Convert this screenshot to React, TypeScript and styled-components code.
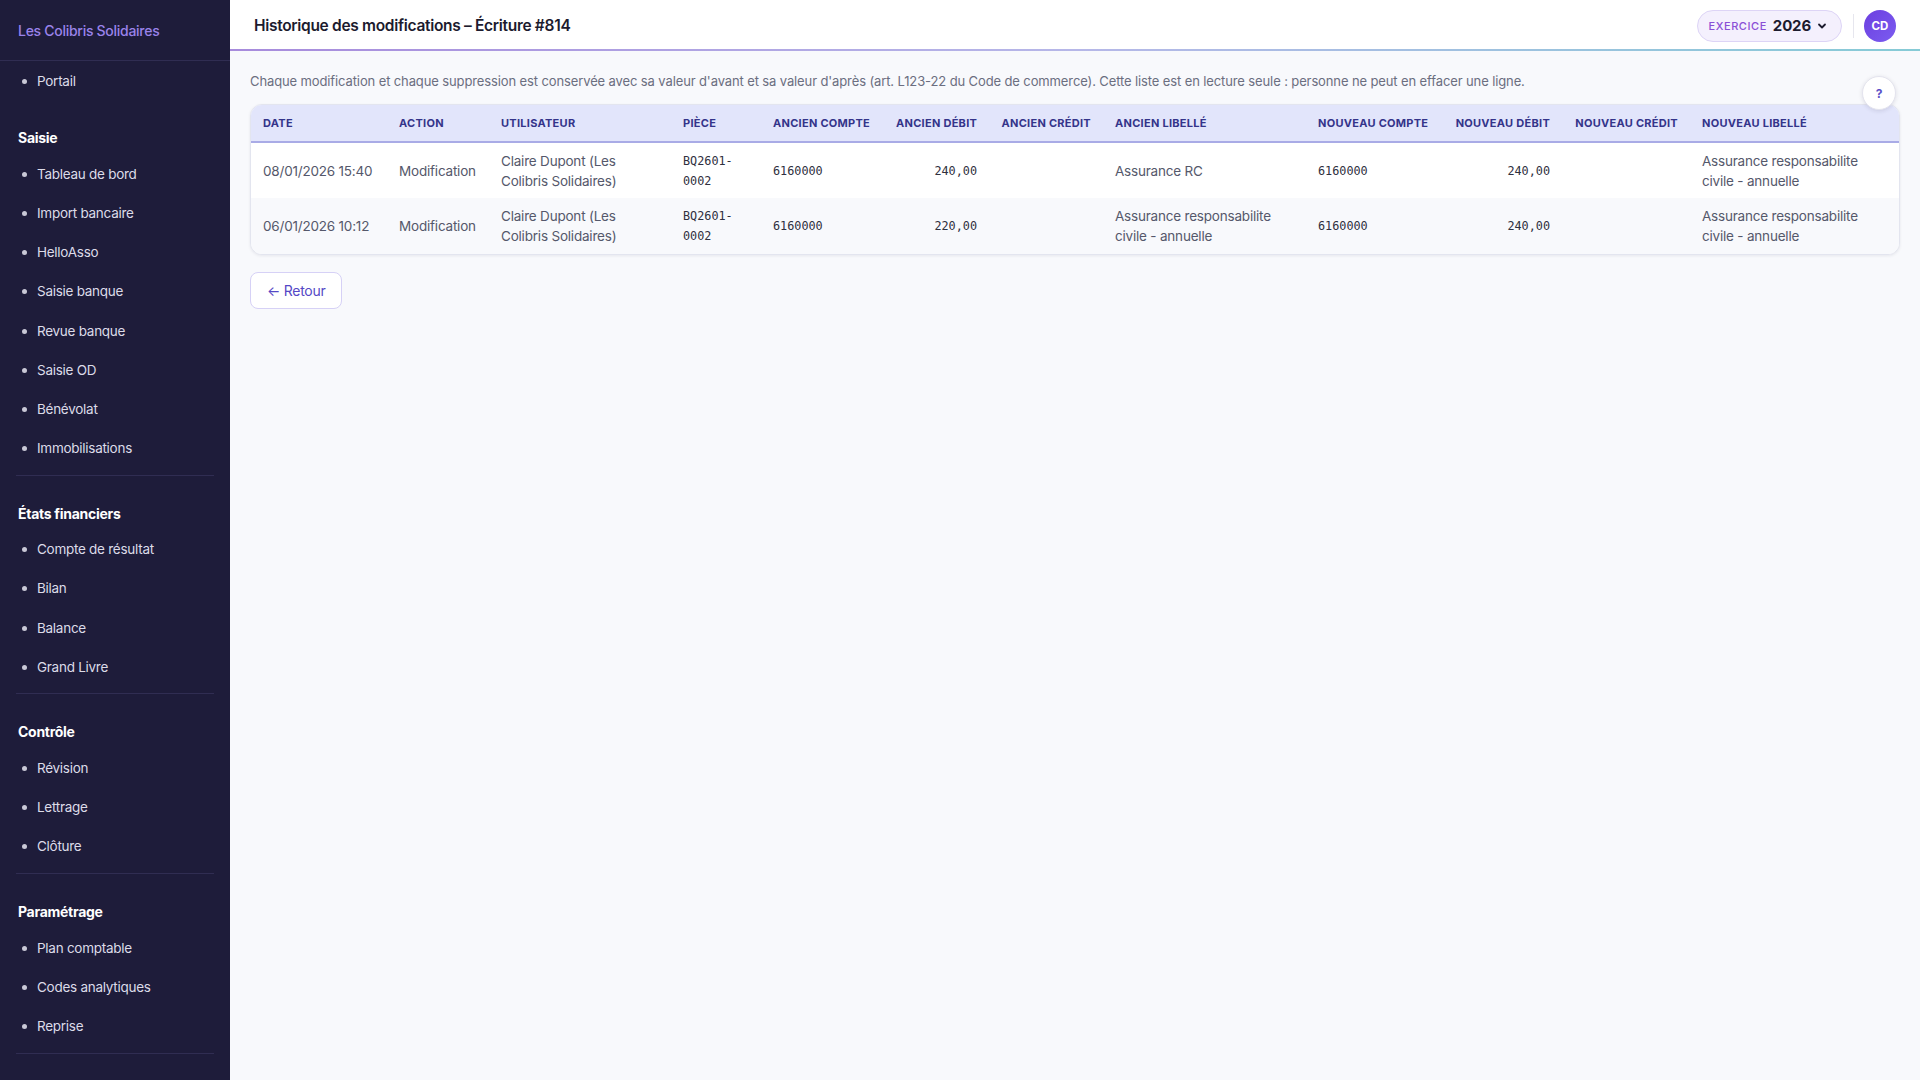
import React from 'react';
import styled, { createGlobalStyle } from 'styled-components';

const GlobalStyle = createGlobalStyle`
  html, body {
    margin: 0;
    padding: 0;
    height: 100%;
  }
  body {
    font-family: Inter, "Noto Sans", sans-serif;
    background: #f8f9fc;
    color: #2a2a3c;
  }
  #root {
    height: 100%;
  }
  * { box-sizing: border-box; }
`;

const Shell = styled.div`
  display: flex;
  height: 1080px;
  overflow: hidden;
`;

const Sidebar = styled.aside`
  width: 230px;
  flex-shrink: 0;
  background: #1e1c3a;
  display: flex;
  flex-direction: column;
  overflow: hidden;
`;

const Brand = styled.div`
  flex-shrink: 0;
  height: 61px;
  padding: 0 18px;
  display: flex;
  align-items: center;
  font-size: 14px;
  font-weight: 500;
  letter-spacing: -0.02em;
  color: #9a83ea;
  border-bottom: 1px solid #302d52;
`;

const NavSection = styled.div<{ $divided?: boolean }>`
  flex-shrink: 0;
  margin: 0 16px;
  padding-bottom: ${(p) => (p.$divided ? '7px' : '0')};
  border-bottom: ${(p) => (p.$divided ? '1px solid #302d52' : 'none')};
`;

const SectionTitle = styled.div`
  font-size: 14px;
  font-weight: 700;
  letter-spacing: -0.02em;
  line-height: 18px;
  color: #ffffff;
  padding: 29px 2px 7px;
`;

const NavList = styled.ul`
  list-style: none;
  margin: 0;
  padding: 0;
`;

const NavItem = styled.li`
  height: 39.2px;
  display: flex;
  align-items: center;
  padding-left: 21px;
  position: relative;
  font-size: 13.5px;
  letter-spacing: -0.02em;
  color: #dcdbe8;

  &::before {
    content: '';
    position: absolute;
    left: 6px;
    top: 50%;
    width: 5px;
    height: 5px;
    margin-top: -2px;
    border-radius: 50%;
    background: #c9c8d6;
  }
`;

const Main = styled.div`
  flex: 1;
  display: flex;
  flex-direction: column;
  min-width: 0;
`;

const TopBar = styled.header`
  flex-shrink: 0;
  height: 51px;
  background: #ffffff;
  display: flex;
  align-items: center;
  padding: 0 24px;
  position: relative;

  &::after {
    content: '';
    position: absolute;
    left: 0;
    right: 0;
    bottom: 0;
    height: 2px;
    background: linear-gradient(90deg, #a78bdc 0%, #b6b7e8 50%, #86cbd6 100%);
  }
`;

const PageTitle = styled.h1`
  margin: 0;
  font-size: 15.5px;
  font-weight: 600;
  letter-spacing: -0.02em;
  color: #1c1b2e;
`;

const TopRight = styled.div`
  margin-left: auto;
  display: flex;
  align-items: center;
`;

const YearPill = styled.div`
  height: 32px;
  padding: 0 14px 0 11px;
  border: 1px solid #ddd4f6;
  background: #f4f0fd;
  border-radius: 16px;
  display: flex;
  align-items: center;
  gap: 6px;
`;

const YearLabel = styled.span`
  font-size: 11px;
  font-weight: 500;
  letter-spacing: 0.05em;
  color: #8a4fd6;
  text-transform: uppercase;
`;

const YearValue = styled.span`
  font-size: 15px;
  font-weight: 700;
  letter-spacing: -0.01em;
  color: #1c1b2e;
`;

const VSep = styled.div`
  width: 1px;
  height: 24px;
  background: #e6e6ee;
  margin: 0 10px 0 11px;
`;

const Avatar = styled.div`
  width: 32px;
  height: 32px;
  border-radius: 50%;
  background: linear-gradient(135deg, #6c3fe0, #7b5cf0);
  color: #ffffff;
  font-size: 11.5px;
  font-weight: 700;
  display: flex;
  align-items: center;
  justify-content: center;
`;

const Content = styled.div`
  padding: 20px 20px 0 20px;
  position: relative;
`;

const Intro = styled.p`
  margin: 0 0 13px;
  font-size: 13px;
  letter-spacing: -0.009em;
  color: #6b6e80;
  line-height: 20px;
`;

const HelpButton = styled.div`
  position: absolute;
  right: 24px;
  top: 25px;
  width: 34px;
  height: 34px;
  border-radius: 50%;
  background: #ffffff;
  border: 1px solid #e4e4ee;
  box-shadow: 0 1px 4px rgba(30, 28, 60, 0.12);
  color: #5b4fc8;
  font-size: 12px;
  font-weight: 700;
  display: flex;
  align-items: center;
  justify-content: center;
  z-index: 2;
`;

const TableCard = styled.div`
  background: #ffffff;
  border: 1px solid #e3e5ef;
  border-radius: 12px;
  box-shadow: 0 1px 3px rgba(30, 28, 60, 0.08);
  overflow: hidden;
`;

const Table = styled.table`
  width: 100%;
  border-collapse: collapse;
  table-layout: fixed;
`;

const Th = styled.th<{ $right?: boolean }>`
  height: 37px;
  padding: 0 12px;
  background: #e2e5fb;
  border-bottom: 2px solid #a9abe6;
  text-align: ${(p) => (p.$right ? 'right' : 'left')};
  font-size: 11px;
  font-weight: 700;
  letter-spacing: 0.025em;
  color: #34348a;
  text-transform: uppercase;
  white-space: nowrap;
`;

const Tr = styled.tr<{ $alt?: boolean }>`
  background: ${(p) => (p.$alt ? '#f8f9fc' : '#ffffff')};
  & + & td {
    border-top: 1px solid #eef0f5;
  }
`;

const Td = styled.td<{ $right?: boolean; $mono?: boolean }>`
  height: 56px;
  padding: 6px 12px;
  vertical-align: middle;
  text-align: ${(p) => (p.$right ? 'right' : 'left')};
  font-family: ${(p) => (p.$mono ? '"DejaVu Sans Mono", "Liberation Mono", monospace' : 'inherit')};
  font-size: ${(p) => (p.$mono ? '11.8px' : '13.5px')};
  letter-spacing: ${(p) => (p.$mono ? '0' : '-0.015em')};
  line-height: 20px;
  color: ${(p) => (p.$mono ? '#2f3040' : '#55586b')};
`;

const BackButton = styled.button`
  margin-top: 17px;
  height: 37px;
  padding: 0 16px;
  background: #ffffff;
  border: 1px solid #d6d1f6;
  border-radius: 8px;
  font-family: inherit;
  font-size: 14px;
  letter-spacing: -0.02em;
  color: #5548c6;
  cursor: pointer;
`;

type NavGroup = { title?: string; items: string[] };

const groups: NavGroup[] = [
  { items: ['Portail'] },
  {
    title: 'Saisie',
    items: [
      'Tableau de bord',
      'Import bancaire',
      'HelloAsso',
      'Saisie banque',
      'Revue banque',
      'Saisie OD',
      'Bénévolat',
      'Immobilisations',
    ],
  },
  { title: 'États financiers', items: ['Compte de résultat', 'Bilan', 'Balance', 'Grand Livre'] },
  { title: 'Contrôle', items: ['Révision', 'Lettrage', 'Clôture'] },
  { title: 'Paramétrage', items: ['Plan comptable', 'Codes analytiques', 'Reprise'] },
];

type Column = { label: string; width: number; right?: boolean; mono?: boolean };

const columns: Column[] = [
  { label: 'Date', width: 136 },
  { label: 'Action', width: 102 },
  { label: 'Utilisateur', width: 182 },
  { label: 'Pièce', width: 90, mono: true },
  { label: 'Ancien compte', width: 123, mono: true },
  { label: 'Ancien débit', width: 105, right: true, mono: true },
  { label: 'Ancien crédit', width: 114, right: true, mono: true },
  { label: 'Ancien libellé', width: 203 },
  { label: 'Nouveau compte', width: 136, mono: true },
  { label: 'Nouveau débit', width: 120, right: true, mono: true },
  { label: 'Nouveau crédit', width: 128, right: true, mono: true },
  { label: 'Nouveau libellé', width: 210 },
];

const rows: string[][] = [
  [
    '08/01/2026 15:40',
    'Modification',
    'Claire Dupont (Les Colibris Solidaires)',
    'BQ2601-0002',
    '6160000',
    '240,00',
    '',
    'Assurance RC',
    '6160000',
    '240,00',
    '',
    'Assurance responsabilite civile - annuelle',
  ],
  [
    '06/01/2026 10:12',
    'Modification',
    'Claire Dupont (Les Colibris Solidaires)',
    'BQ2601-0002',
    '6160000',
    '220,00',
    '',
    'Assurance responsabilite civile - annuelle',
    '6160000',
    '240,00',
    '',
    'Assurance responsabilite civile - annuelle',
  ],
];

export default function App() {
  return (
    <>
      <GlobalStyle />
      <Shell>
        <Sidebar>
          <Brand>Les Colibris Solidaires</Brand>
          {groups.map((g, i) => (
            <NavSection key={i} $divided={i > 0}>
              {g.title && <SectionTitle>{g.title}</SectionTitle>}
              <NavList>
                {g.items.map((it) => (
                  <NavItem key={it}>{it}</NavItem>
                ))}
              </NavList>
            </NavSection>
          ))}
        </Sidebar>
        <Main>
          <TopBar>
            <PageTitle>Historique des modifications – Écriture #814</PageTitle>
            <TopRight>
              <YearPill>
                <YearLabel>Exercice</YearLabel>
                <YearValue>2026</YearValue>
                <svg width="10" height="10" viewBox="0 0 10 10" fill="none">
                  <path d="M2 3.5 L5 6.5 L8 3.5" stroke="#1c1b2e" strokeWidth="1.8" strokeLinecap="round" strokeLinejoin="round" />
                </svg>
              </YearPill>
              <VSep />
              <Avatar>CD</Avatar>
            </TopRight>
          </TopBar>
          <Content>
            <HelpButton>?</HelpButton>
            <Intro>
              Chaque modification et chaque suppression est conservée avec sa valeur d'avant et sa valeur d'après (art. L123-22 du Code de commerce). Cette liste est en lecture seule : personne ne peut en effacer une ligne.
            </Intro>
            <TableCard>
              <Table>
                <colgroup>
                  {columns.map((c) => (
                    <col key={c.label} style={{ width: c.width }} />
                  ))}
                </colgroup>
                <thead>
                  <tr>
                    {columns.map((c) => (
                      <Th key={c.label} $right={c.right}>
                        {c.label}
                      </Th>
                    ))}
                  </tr>
                </thead>
                <tbody>
                  {rows.map((r, ri) => (
                    <Tr key={ri} $alt={ri % 2 === 1}>
                      {r.map((v, ci) => (
                        <Td key={ci} $right={columns[ci].right} $mono={columns[ci].mono}>
                          {v}
                        </Td>
                      ))}
                    </Tr>
                  ))}
                </tbody>
              </Table>
            </TableCard>
            <BackButton>← Retour</BackButton>
          </Content>
        </Main>
      </Shell>
    </>
  );
}
